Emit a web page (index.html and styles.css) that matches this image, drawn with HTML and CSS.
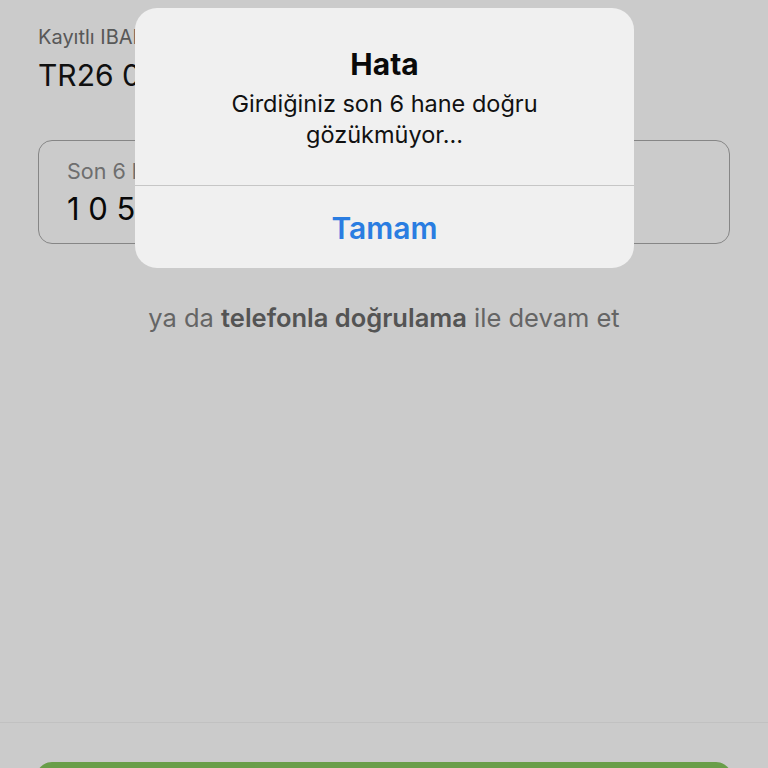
FILE: index.html
```html
<!DOCTYPE html>
<html lang="tr">
<head>
<meta charset="utf-8">
<link rel="stylesheet" href="styles.css">
</head>
<body>
<div class="screen">
  <main class="content">
    <div class="iban">
      <div class="iban-label">Kayıtlı IBAN</div>
      <div class="iban-value">TR26 0006 2000 1234</div>
    </div>
    <div class="field">
      <div class="field-label">Son 6 hane</div>
      <div class="field-value">1 0 5 4 2 8</div>
    </div>
    <p class="alt">ya da <b>telefonla doğrulama</b> ile devam et</p>
  </main>
  <footer class="footer">
    <div class="primary-btn"></div>
  </footer>
  <div class="overlay"></div>
  <div class="alert" role="alertdialog">
    <div class="alert-body">
      <div class="alert-title">Hata</div>
      <div class="alert-msg">Girdiğiniz son 6 hane doğru<br>gözükmüyor...</div>
    </div>
    <div class="alert-action">Tamam</div>
  </div>
</div>
</body>
</html>
```

FILE: styles.css
```css
* { box-sizing: border-box; }
html, body { margin: 0; padding: 0; }
body {
  font-family: Inter, "Noto Sans", "Liberation Sans", sans-serif;
  background: #fefefe;
}
.screen {
  position: relative;
  width: 768px;
  height: 768px;
  overflow: hidden;
  display: flex;
  flex-direction: column;
}
.content {
  flex: 1;
  padding: 24px 38px 0;
  display: flex;
  flex-direction: column;
}
.iban-label {
  font-size: 20px;
  line-height: 26px;
  color: #6e6e6e;
}
.iban-value {
  font-size: 30px;
  line-height: 36px;
  color: #141414;
  margin-top: 7px;
}
.field {
  margin-top: 47px;
  height: 104px;
  border: 1px solid #a8a8a8;
  border-radius: 14px;
  padding: 16px 28px 0;
}
.field-label {
  font-size: 21.5px;
  line-height: 28px;
  color: #8a8a8a;
}
.field-value {
  font-size: 31px;
  line-height: 38px;
  color: #0a0a0a;
  margin-top: 5px;
}
.alt {
  margin: 58px 0 0;
  text-align: center;
  font-size: 25.5px;
  line-height: 32px;
  color: #7f7f7f;
}
.alt b { font-weight: 600; color: #6a6a6a; }
.footer {
  height: 46px;
  border-top: 1px solid #f2f2f2;
  padding: 39px 36px 0;
}
.primary-btn {
  height: 60px;
  border-radius: 16px;
  background: #84c65c;
}
.overlay {
  position: absolute;
  inset: 0;
  background: rgba(0, 0, 0, 0.2);
}
.alert {
  position: absolute;
  left: 135px;
  top: 8px;
  width: 499px;
  height: 260px;
  border-radius: 22px;
  background: #f0f0f0;
  display: flex;
  flex-direction: column;
  text-align: center;
  overflow: hidden;
}
.alert-body {
  height: 178px;
  border-bottom: 1px solid #c6c6c6;
  padding-top: 40px;
}
.alert-title {
  font-size: 30px;
  line-height: 32px;
  font-weight: 700;
  color: #0a0a0a;
}
.alert-msg {
  margin-top: 8px;
  font-size: 23.5px;
  line-height: 31px;
  color: #111;
}
.alert-action {
  flex: 1;
  display: flex;
  align-items: center;
  justify-content: center;
  font-size: 30px;
  font-weight: 600;
  color: #2a7de1;
  padding-top: 2px;
}
```
